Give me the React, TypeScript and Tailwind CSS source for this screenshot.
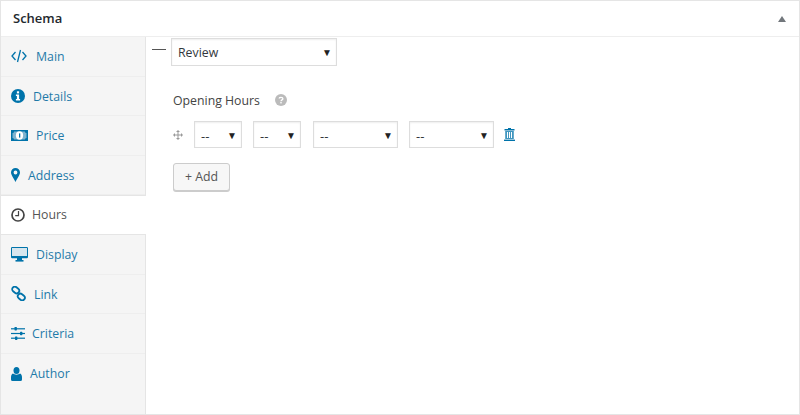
import React from "react";

const B = "#0073aa";

function CodeIcon() {
  return (
    <svg width="16" height="14" viewBox="0 0 16 14" fill="none" stroke={B} strokeWidth="1.3">
      <path d="M4.5 3 L1 7 L4.5 11" />
      <path d="M9.5 1 L6.5 13" />
      <path d="M11.5 3 L15 7 L11.5 11" />
    </svg>
  );
}
function InfoIcon() {
  return (
    <svg width="14" height="14" viewBox="0 0 14 14">
      <circle cx="7" cy="7" r="7" fill={B} />
      <rect x="5.9" y="2.3" width="2.2" height="2.1" fill="#fff" />
      <path d="M4.9 5.4 H8.1 V10 H9.1 V11.5 H4.9 V10 H5.9 V6.9 H4.9 Z" fill="#fff" />
    </svg>
  );
}
function MoneyIcon() {
  return (
    <svg width="17" height="11" viewBox="0 0 17 11">
      <rect width="17" height="11" fill={B} />
      <rect x="1.5" y="1.5" width="14" height="8" fill="#7fb3cf" />
      <ellipse cx="8.5" cy="5.5" rx="3.6" ry="4.2" fill="#fff" />
      <rect x="8" y="3.4" width="1.3" height="4.2" fill={B} />
      <circle cx="1.5" cy="1.5" r="1.6" fill={B} />
      <circle cx="15.5" cy="1.5" r="1.6" fill={B} />
      <circle cx="1.5" cy="9.5" r="1.6" fill={B} />
      <circle cx="15.5" cy="9.5" r="1.6" fill={B} />
    </svg>
  );
}
function MarkerIcon() {
  return (
    <svg width="9" height="14" viewBox="0 0 9 14">
      <path fillRule="evenodd" d="M4.5 0 A4.5 4.5 0 0 1 9 4.5 C9 7 6 11 4.5 14 C3 11 0 7 0 4.5 A4.5 4.5 0 0 1 4.5 0 Z M4.5 2.6 A1.9 1.9 0 1 0 4.5 6.4 A1.9 1.9 0 1 0 4.5 2.6 Z" fill={B} />
    </svg>
  );
}
function ClockIcon() {
  return (
    <svg width="14" height="14" viewBox="0 0 14 14" fill="none" stroke="#444">
      <circle cx="7" cy="7" r="6" strokeWidth="1.7" />
      <path d="M7.5 3 V7.6 H4.2" strokeWidth="1.2" />
    </svg>
  );
}
function DesktopIcon() {
  return (
    <svg width="17" height="15" viewBox="0 0 17 15">
      <rect x="1" y="1" width="15" height="8.5" fill="#d7e6ee" />
      <path fillRule="evenodd" d="M1.2 0 H15.8 A1.2 1.2 0 0 1 17 1.2 V10 A1.2 1.2 0 0 1 15.8 11.2 H1.2 A1.2 1.2 0 0 1 0 10 V1.2 A1.2 1.2 0 0 1 1.2 0 Z M1 1 V9 H16 V1 Z" fill={B} />
      <rect x="6" y="11" width="5" height="2.2" fill={B} />
      <rect x="4.5" y="13" width="8" height="1.6" fill={B} />
    </svg>
  );
}
function LinkIcon() {
  return (
    <svg width="15" height="15" viewBox="0 0 15 15" fill="none" stroke={B} strokeWidth="1.8">
      <rect x="0.9" y="1.4" width="7.6" height="5.2" rx="2.6" transform="rotate(40 4.7 4)" />
      <rect x="6.5" y="8.4" width="7.6" height="5.2" rx="2.6" transform="rotate(40 10.3 11)" />
    </svg>
  );
}
function SlidersIcon() {
  return (
    <svg width="14" height="13" viewBox="0 0 14 13">
      <rect y="1.2" width="14" height="1.2" fill={B} />
      <rect y="5.9" width="14" height="1.2" fill={B} />
      <rect y="10.6" width="14" height="1.2" fill={B} />
      <rect x="3.5" y="0" width="2.4" height="3.4" rx="0.6" fill={B} />
      <rect x="9" y="4.8" width="2.4" height="3.4" rx="0.6" fill={B} />
      <rect x="4" y="9.5" width="2.4" height="3.4" rx="0.6" fill={B} />
    </svg>
  );
}
function UserIcon() {
  return (
    <svg width="11" height="14" viewBox="0 0 11 14" fill={B}>
      <ellipse cx="5.5" cy="3.5" rx="3" ry="3.5" />
      <path d="M2 6.5 C3.5 8 7.5 8 9 6.5 C10.4 7 11 8.5 11 10.5 V12.5 Q11 14 9.5 14 H1.5 Q0 14 0 12.5 V10.5 C0 8.5 .6 7 2 6.5 Z" />
    </svg>
  );
}
function TrashIcon() {
  return (
    <svg width="11" height="13" viewBox="0 0 11 13" className="ml-[10px]">
      <path d="M4 0 H7 V1 H10.5 V2.5 H0.5 V1 H4 Z" fill={B} />
      <path fillRule="evenodd" d="M1.2 3 H9.8 V11 H1.2 Z M3 4 V10 H4 V4 Z M5 4 V10 H6 V4 Z M7 4 V10 H8 V4 Z" fill={B} opacity="0.75" />
      <rect x="0" y="11.6" width="11" height="1.4" fill={B} />
    </svg>
  );
}
function MoveIcon() {
  return (
    <svg width="10" height="10" viewBox="0 0 10 10" fill="#999" className="mr-[11px]">
      <path d="M5 0 L7 2 H5.5 V4.5 H8 V3 L10 5 L8 7 V5.5 H5.5 V8 H7 L5 10 L3 8 H4.5 V5.5 H2 V7 L0 5 L2 3 V4.5 H4.5 V2 H3 Z" />
    </svg>
  );
}
function HelpIcon() {
  return (
    <svg width="12" height="12" viewBox="0 0 12 12" className="mb-[2px]">
      <circle cx="6" cy="6" r="6" fill="#bbb" />
      <path d="M4.2 4.6 C4.2 2.9 7.9 2.9 7.9 4.7 C7.9 5.9 6 5.9 6 7.2" fill="none" stroke="#fff" strokeWidth="1.3" />
      <rect x="5.3" y="8" width="1.4" height="1.4" fill="#fff" />
    </svg>
  );
}

const tabs: { label: string; icon: React.ReactNode; gap: string; active?: boolean }[] = [
  { label: "Main", icon: <CodeIcon />, gap: "gap-[9px]" },
  { label: "Details", icon: <InfoIcon />, gap: "gap-[8px]" },
  { label: "Price", icon: <MoneyIcon />, gap: "gap-[8px]" },
  { label: "Address", icon: <MarkerIcon />, gap: "gap-[8px]" },
  { label: "Hours", icon: <ClockIcon />, gap: "gap-[7px]", active: true },
  { label: "Display", icon: <DesktopIcon />, gap: "gap-[8px]" },
  { label: "Link", icon: <LinkIcon />, gap: "gap-[8px]" },
  { label: "Criteria", icon: <SlidersIcon />, gap: "gap-[7px]" },
  { label: "Author", icon: <UserIcon />, gap: "gap-[8px]" },
];

function Select({ label, width }: { label: string; width: string }) {
  return (
    <div className={`${width} h-[27px] flex items-center justify-between border border-[#ddd] shadow-[inset_0_1px_2px_rgba(0,0,0,0.07)] bg-white pl-[6px] pr-[4px] text-[13px] text-[#32373c]`}>
      <span className="pt-[4px]">{label}</span>
      <span className="text-[10px] text-[#222] leading-none">▼</span>
    </div>
  );
}

export default function App() {
  return (
    <div className="w-[800px] h-[415px] bg-white border border-[#e5e5e5] flex flex-col font-['Open_Sans',sans-serif] text-[12.3px] text-[#555] overflow-hidden">
      <div className="h-[36px] shrink-0 flex items-center justify-between pl-[12px] pr-[13px] border-b border-[#eee]">
        <span className="text-[#23282d] font-semibold text-[13px]">Schema</span>
        <span className="w-0 h-0 border-l-[4px] border-r-[4px] border-b-[6px] border-l-transparent border-r-transparent border-b-[#72777c]" />
      </div>
      <div className="flex flex-1 min-h-0">
        <div className="w-[145px] shrink-0 bg-[#f5f5f5] border-r border-[#e5e5e5] flex flex-col">
          {tabs.map((t) =>
            t.active ? (
              <div key={t.label} className={`h-[39.6px] -mr-px bg-white border-y border-[#e5e5e5] flex items-center pl-[10px] text-[#555] ${t.gap}`}>
                {t.icon}
                <span className="pt-[1px]">{t.label}</span>
              </div>
            ) : (
              <div key={t.label} className={`h-[39.6px] border-b border-[#eee] last:border-b-0 flex items-center pl-[10px] text-[#1f7aa9] ${t.gap}`}>
                {t.icon}
                <span className="pt-[2px]">{t.label}</span>
              </div>
            )
          )}
        </div>
        <div className="flex-1 flex flex-col pl-[6px] pt-[1px]">
          <div className="flex items-center gap-[5px]">
            <div className="w-[14px] h-px bg-[#555] mb-[6px]" />
            <div className="w-[166px] h-[28px] flex items-center justify-between border border-[#ddd] bg-white shadow-[inset_0_1px_2px_rgba(0,0,0,0.07)] pl-[6px] pr-[4px] text-[#32373c]">
              <span className="pt-[2px]">Review</span>
              <span className="text-[10px] text-[#222] leading-none">▼</span>
            </div>
          </div>
          <div className="flex items-center gap-[15px] ml-[21px] mt-[26px]">
            <span className="text-[#444]">Opening Hours</span>
            <HelpIcon />
          </div>
          <div className="flex items-center mt-[11px] ml-[21px]">
            <MoveIcon />
            <Select label="--" width="w-[48px]" />
            <Select label="--" width="w-[48px] ml-[11px]" />
            <Select label="--" width="w-[85px] ml-[12px]" />
            <Select label="--" width="w-[85px] ml-[11px]" />
            <TrashIcon />
          </div>
          <div className="ml-[21px] mt-[15px]">
            <div className="w-[57px] h-[28px] flex items-center justify-center bg-[#f7f7f7] border border-[#ccc] rounded-[3px] shadow-[0_1px_0_#ccc] text-[#555]">+ Add</div>
          </div>
        </div>
      </div>
    </div>
  );
}
